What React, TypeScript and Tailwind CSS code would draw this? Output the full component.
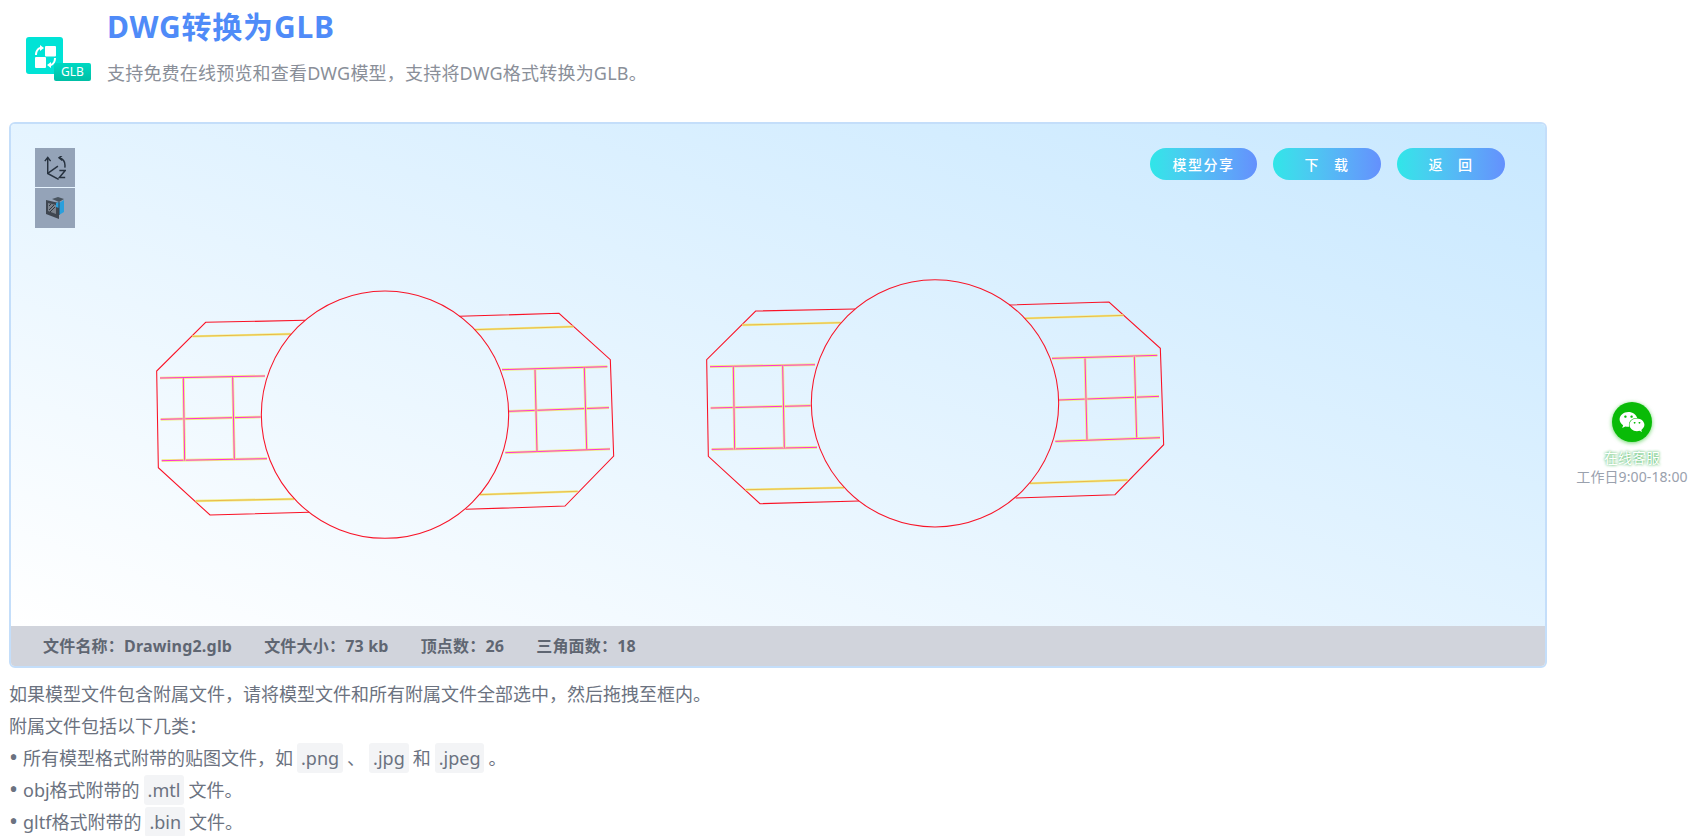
import { FaWeixin } from 'react-icons/fa';

type Seg = [number, number, number, number];

// model coordinates are measured from a 3x crop, hence the scale on the group
const yellowLines: Seg[] = [
  [157, 169, 452, 162],
  [167, 663, 462, 657],
  [1005, 149, 1300, 140],
  [1020, 644, 1313, 634],
];

const pinkLines: Seg[] = [
  [60, 294, 375, 288],
  [62, 418, 362, 411],
  [65, 542, 381, 536],
  [130, 294, 134, 542],
  [278, 291, 283, 538],
  [1086, 269, 1402, 260],
  [1106, 394, 1407, 383],
  [1096, 518, 1410, 507],
  [1185, 269, 1191, 514],
  [1333, 263, 1340, 507],
];

function Model({ dx, dy }: { dx: number; dy: number }) {
  return (
    <g transform={`translate(${dx} ${dy}) scale(${1 / 3})`}>
      <polyline points="495,121 197,127 50,273 55,563 210,705 507,697" fill="none" stroke="#fa1226" strokeWidth="3.2" />
      <polyline points="958,109 1257,100 1411,239 1421,528 1275,678 977,688" fill="none" stroke="#fa1226" strokeWidth="3.2" />
      {yellowLines.map(([x1, y1, x2, y2], i) => (
        <g key={i}>
          <line x1={x1} y1={y1} x2={x2} y2={y2} stroke="#f2ee88" strokeWidth="7" />
          <line x1={x1} y1={y1} x2={x2} y2={y2} stroke="#e8b040" strokeWidth="2.6" />
        </g>
      ))}
      {pinkLines.map(([x1, y1, x2, y2], i) => (
        <g key={i}>
          <line x1={x1} y1={y1} x2={x2} y2={y2} stroke="#f0ec80" strokeWidth="8" />
          <line x1={x1} y1={y1} x2={x2} y2={y2} stroke="#ff30d8" strokeWidth="3" />
        </g>
      ))}
      <circle cx="735" cy="404" r="371" fill="none" stroke="#f81428" strokeWidth="3.2" />
    </g>
  );
}

function AxisIcon() {
  return (
    <svg width="22" height="24" viewBox="0 0 60 66" fill="none" stroke="#27323f" strokeWidth="4">
      <path d="M10 5v43l30 16" />
      <path d="M2 14l8-10 8 10" />
      <path d="M10 48l28-20" />
      <path d="M42 5c11 3 17 13 15 27" />
      <path d="M50-2l-9 7 9 7" />
      <path d="M42 40h16l-16 19h16" />
    </svg>
  );
}

function CubeIcon() {
  return (
    <svg width="18" height="22" viewBox="0 0 18 22">
      <path d="M0 3l13 3v16L0 17z" fill="#3f4650" />
      <path d="M2 6l8 2v9l-8-3z" fill="#7b828c" />
      <path d="M3 13l5-5M4 15l5-5M3 9l2-2" stroke="#333a43" strokeWidth="1" />
      <path d="M6 2l6-2 6 2-5 3z" fill="#4a5560" />
      <path d="M13 6l5-3v12l-5 3z" fill="#2a9fdc" />
      <path d="M10 6l3-1v6l-3-1z" fill="#2a9fdc" />
      <path d="M13 5v13" stroke="#39414c" strokeWidth="1" />
    </svg>
  );
}

function AppIcon() {
  return (
    <div className="relative h-[44px] w-[65px]">
      <div className="h-[37px] w-[37px] rounded-[3px] bg-[#00e3d6]">
        <svg width="37" height="37" viewBox="0 0 37 37" fill="#ffffff">
          <rect x="19" y="9" width="11" height="10.500" rx="1" />
          <rect x="9" y="20" width="11" height="11" rx="1" />
          <path d="M9 18c0-4 2-7 5-8V8l4 3-4 3v-2c-2 1-3 3-3 6z" />
          <path d="M30 21c0 4-2 7-5 8v2l-4-3 4-3v2c2-1 3-3 3-6z" />
        </svg>
      </div>
      <div className="absolute right-0 bottom-0 flex h-[18px] w-[37px] items-center justify-center rounded-[2px] bg-gradient-to-b from-[#00d9c3] to-[#00bfa5] text-[12px] leading-none text-white">
        GLB
      </div>
    </div>
  );
}

function ActionButton({ label, wide }: { label: string; wide?: boolean }) {
  return (
    <button className={`h-[32px] rounded-full bg-gradient-to-r from-[#2fe6e8] to-[#6490fd] text-[14px] font-medium tracking-[1.5px] whitespace-pre text-white [word-spacing:-0.5px] ${wide ? 'w-[108px]' : 'w-[107px]'}`}>
      {label}
    </button>
  );
}

function Code({ children }: { children: string }) {
  return <code className="mx-[4px] rounded-[3px] bg-[#f3f4f6] px-[4px] py-[3px] font-['Noto_Sans','Noto_Sans_CJK_SC',sans-serif]">{children}</code>;
}

function Bullet() {
  return <span className="inline-block w-[14px] align-[-1px] text-[24px] leading-none">•</span>;
}

export default function App() {
  return (
    <div className="relative h-[836px] w-[1697px] overflow-hidden bg-white font-['Noto_Sans','Noto_Sans_CJK_SC',sans-serif] text-[#6b7280]">
      {/* Header */}
      <div className="flex h-[122px] pl-[26px]">
        <div className="pt-[37px]">
          <AppIcon />
        </div>
        <div className="pl-[16px]">
          <h1 className="mt-[4px] h-[46px] text-[30px] leading-[46px] font-bold tracking-[0.8px] text-[#4f8bf8]">DWG转换为GLB</h1>
          <p className="mt-[8px] text-[18px] leading-[30px] tracking-[0.2px] text-[#8a8f99]">支持免费在线预览和查看DWG模型，支持将DWG格式转换为GLB。</p>
        </div>
      </div>

      {/* Viewer */}
      <div className="ml-[9px] flex h-[546px] w-[1538px] flex-col overflow-hidden rounded-[6px] border-2 border-[#c4defa]">
        <div className="relative flex flex-1 items-start justify-between bg-[linear-gradient(200deg,#c8e8ff,#ffffff)] pt-[24px] pr-[40px] pl-[24px]">
          <svg className="absolute inset-0" width="1534" height="502" viewBox="11 124 1534 502">
            <Model dx={140} dy={280} />
            <Model dx={690} dy={268.7} />
          </svg>
          <div className="relative flex flex-col gap-px">
            <div className="flex h-[39px] w-[40px] items-center justify-center bg-[#94a3b8]">
              <AxisIcon />
            </div>
            <div className="flex h-[40px] w-[40px] items-center justify-center bg-[#94a3b8]">
              <CubeIcon />
            </div>
          </div>
          <div className="relative flex gap-[16px]">
            <ActionButton label="模型分享" />
            <ActionButton label={'下   载'} wide />
            <ActionButton label={'返   回'} wide />
          </div>
        </div>
        <div className="flex h-[40px] items-center gap-[32px] bg-[#d1d4dc] pl-[32px] text-[16px] font-bold tracking-[0.2px] text-[#5f6672]">
          <span>文件名称：Drawing2.glb</span>
          <span>文件大小：73 kb</span>
          <span>顶点数：26</span>
          <span>三角面数：18</span>
        </div>
      </div>

      {/* Notes */}
      <div className="mt-[10px] pl-[9px] text-[18px] leading-[32px]">
        <p>如果模型文件包含附属文件，请将模型文件和所有附属文件全部选中，然后拖拽至框内。</p>
        <p>附属文件包括以下几类：</p>
        <p><Bullet />所有模型格式附带的贴图文件，如<Code>.png</Code>、<Code>.jpg</Code>和<Code>.jpeg</Code>。</p>
        <p><Bullet />obj格式附带的<Code>.mtl</Code>文件。</p>
        <p><Bullet />gltf格式附带的<Code>.bin</Code>文件。</p>
      </div>

      {/* Support widget */}
      <div className="absolute top-[402px] left-[1576px] flex w-[112px] flex-col items-center">
        <div className="flex h-[40px] w-[40px] items-center justify-center rounded-full bg-[#09bb07] shadow-[0_1px_4px_rgba(9,187,7,0.6)]">
          <FaWeixin className="h-[26px] w-[26px] text-white" />
        </div>
        <span className="mt-[6px] text-[14px] leading-[20px] text-white [text-shadow:0_0_3px_#0a9f2a]">在线客服</span>
        <span className="text-[14px] leading-[18px] tracking-[0.1px] whitespace-nowrap text-[#9aa1ad]">工作日9:00-18:00</span>
      </div>
    </div>
  );
}
